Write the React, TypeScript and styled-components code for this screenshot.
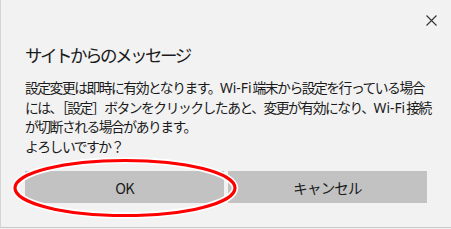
import React from 'react';
import styled, {createGlobalStyle} from 'styled-components';

const GlobalStyle = createGlobalStyle`
  html, body {
    margin: 0;
    padding: 0;
    background: #f2f2f2;
  }
`

const Dialog = styled.div`
  position: relative;
  box-sizing: border-box;
  width: 451px;
  height: 228px;
  background: #f2f2f2;
  border-left: 1px solid #d4d4d4;
  border-bottom: 1px solid #c9c9c9;
  padding: 0 24px 0 24px;
  display: flex;
  flex-direction: column;
  font-family: "Noto Sans CJK JP", "Noto Sans", sans-serif;
  color: #1a1a1a;
`

const Header = styled.div`
  height: 40px;
  display: flex;
  justify-content: flex-end;
  align-items: center;
  margin-right: -20px;
`

const CloseButton = styled.button`
  width: 32px;
  height: 32px;
  border: none;
  background: transparent;
  padding: 0;
  display: flex;
  align-items: center;
  justify-content: center;
`

const Title = styled.h1`
  margin: 0;
  height: 30px;
  font-size: 17.5px;
  font-weight: 400;
  letter-spacing: -2.5px;
  line-height: 30px;
  color: #1a1a1a;
`

const Message = styled.div`
  margin-top: 8px;
  font-size: 13.8px;
  line-height: 19.5px;
  letter-spacing: -1.5px;
  white-space: nowrap;
`

const Line = styled.div``

const Latin = styled.span`
  font-family: "Noto Sans", sans-serif;
  letter-spacing: 0;
  margin-right: 1px;
`

const ButtonRow = styled.div`
  margin-top: 15px;
  display: flex;
  gap: 4px;
`

const Button = styled.button`
  width: 199px;
  height: 32px;
  border: none;
  background: #c2c2c2;
  font-family: "Noto Sans CJK JP", "Noto Sans", sans-serif;
  font-size: 14.5px;
  letter-spacing: -0.8px;
  color: #1a1a1a;
  padding: 0;
`

const Annotation = styled.svg`
  position: absolute;
  left: 0;
  top: 0;
  pointer-events: none;
`

export default function App() {
    return (
        <>
            <GlobalStyle/>
            <Dialog>
                <Header>
                    <CloseButton aria-label="閉じる">
                        <svg width="11" height="11" viewBox="0 0 11 11">
                            <path d="M0.5 0.5 L10.5 10.5 M10.5 0.5 L0.5 10.5" stroke="#333" strokeWidth="1.1"/>
                        </svg>
                    </CloseButton>
                </Header>
                <Title>サイトからのメッセージ</Title>
                <Message>
                    <Line>設定変更は即時に有効となります。<Latin>Wi-Fi</Latin>端末から設定を行っている場合</Line>
                    <Line>には、［設定］ボタンをクリックしたあと、変更が有効になり、<Latin>Wi-Fi</Latin>接続</Line>
                    <Line>が切断される場合があります。</Line>
                    <Line>よろしいですか？</Line>
                </Message>
                <ButtonRow>
                    <Button>OK</Button>
                    <Button>キャンセル</Button>
                </ButtonRow>
                <Annotation width="451" height="229">
                    <ellipse cx="124" cy="188" rx="110" ry="27.5" fill="none" stroke="#ffffff" strokeWidth="6.5"/>
                    <ellipse cx="124" cy="188" rx="110" ry="27.5" fill="none" stroke="#ff0000" strokeWidth="3.2"/>
                </Annotation>
            </Dialog>
        </>
    );
}
